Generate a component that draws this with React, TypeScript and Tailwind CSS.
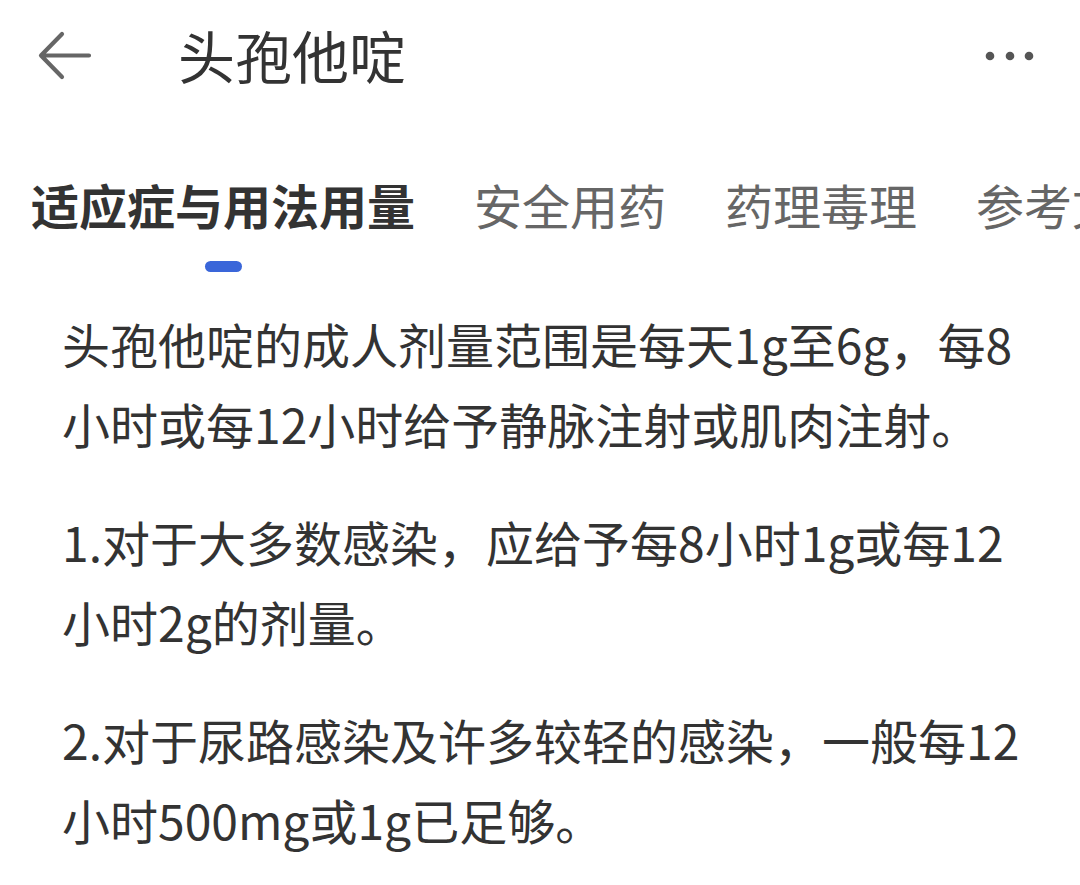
import React from "react";

const FONT = { fontFamily: '"Noto Sans CJK SC", "Noto Sans", sans-serif' };

export default function App() {
  const tabs = ["适应症与用法用量", "安全用药", "药理毒理", "参考文献"];
  return (
    <div className="w-[1080px] h-[885px] bg-white overflow-hidden" style={FONT}>
      <div className="flex h-[114px] items-center pb-[6px] pl-[38px] pr-[44px]">
        <svg width="54" height="50" viewBox="0 0 54 50" className="shrink-0 mt-[4px]">
          <path d="M51 24.5H4M24 3L3 24.5L24 46" fill="none" stroke="#666" strokeWidth="4.2" strokeLinecap="round" strokeLinejoin="round" />
        </svg>
        <div className="ml-[86px] text-[57px] leading-[64px] text-[#333]">头孢他啶</div>
        <div className="flex-1" />
        <svg width="52" height="12" viewBox="0 0 52 12" className="mt-[4px]">
          <circle cx="6" cy="6" r="4.3" fill="#555" />
          <circle cx="26" cy="6" r="4.3" fill="#555" />
          <circle cx="45" cy="6" r="4.3" fill="#555" />
        </svg>
      </div>
      <div className="flex gap-[59px] pl-[31px] pt-[58px] whitespace-nowrap overflow-hidden">
        {tabs.map((t, i) => (
          <div key={t} className="flex flex-col items-center shrink-0">
            <div className={i === 0 ? "text-[48px] leading-[64px] font-bold text-[#333]" : "text-[48px] leading-[64px] text-[#666]"}>{t}</div>
            <div className={i === 0 ? "mt-[25px] h-[11px] w-[37px] rounded-full bg-[#3a66d9]" : "mt-[25px] h-[11px] w-[37px]"} />
          </div>
        ))}
      </div>
      <div className="pl-[62px] pr-[40px] mt-[31px] text-[48px] leading-[80px] text-[#333]">
        <p>头孢他啶的成人剂量范围是每天1g至6g，每8小时或每12小时给予静脉注射或肌肉注射。</p>
        <p className="mt-[38px]">1.对于大多数感染，应给予每8小时1g或每12小时2g的剂量。</p>
        <p className="mt-[38px]">2.对于尿路感染及许多较轻的感染，一般每12小时500mg或1g已足够。</p>
      </div>
    </div>
  );
}
